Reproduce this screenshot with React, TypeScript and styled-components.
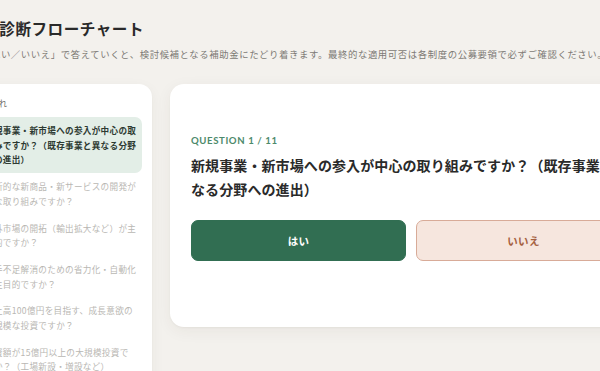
import * as React from "react"
import styled, { createGlobalStyle } from "styled-components"

const GlobalStyle = createGlobalStyle`
  html, body {
    margin: 0;
    padding: 0;
    background: #f3f1ed;
    overflow: hidden;
  }
  body {
    font-family: "Noto Sans CJK JP", "Noto Sans", sans-serif;
    color: #2b2b2b;
  }
`

const questions = [
  "新規事業・新市場への参入が中心の取組みですか？（既存事業と異なる分野への進出）",
  "革新的な新商品・新サービスの開発が主な取り組みですか？",
  "海外市場の開拓（輸出拡大など）が主目的ですか？",
  "人手不足解消のための省力化・自動化が主目的ですか？",
  "売上高100億円を目指す、成長意欲の大規模な投資ですか？",
  "投資額が15億円以上の大規模投資ですか？（工場新設・増設など）",
  "事業場内最低賃金の引上げを計画していますか？",
  "ITツールの導入による業務効率化が目的ですか？",
  "従業員20人以下の小規模事業者ですか？",
  "販路開拓のための広報・展示会出展が中心ですか？",
  "事業承継やM&Aに伴う取り組みですか？",
]

const Styled = {
  Page: styled.div`
    margin-left: -49px;
    padding-top: 17px;
    width: 720px;
  `,
  Title: styled.h1`
    margin: 0;
    font-size: 15.6px;
    line-height: 22px;
    font-weight: 700;
    letter-spacing: 0.5px;
    color: #2a2a2a;
  `,
  Lead: styled.p`
    margin: 8px 0 0;
    font-size: 9.4px;
    line-height: 14px;
    letter-spacing: 0.6px;
    color: #7d7a75;
    white-space: nowrap;
  `,
  Layout: styled.div`
    display: grid;
    grid-template-columns: 201px 482px;
    gap: 18px;
    align-items: start;
    margin-top: 23px;
  `,
  Sidebar: styled.aside`
    background: #ffffff;
    border-radius: 13px;
    padding: 12px 10px 16px 12px;
    box-shadow: 0 1px 2px rgba(60, 50, 30, 0.04), 0 4px 14px rgba(60, 50, 30, 0.05);
  `,
  SideLabel: styled.div`
    font-size: 8.6px;
    line-height: 14px;
    letter-spacing: 0.3px;
    color: #6f6c67;
    margin-bottom: 7px;
  `,
  StepList: styled.ol`
    list-style: none;
    margin: 0;
    padding: 0;
  `,
  Step: styled.li<{ $active?: boolean }>`
    display: flex;
    gap: 3px;
    padding: 6px 5px 6px 6px;
    border-radius: 7px;
    background: ${(p) => (p.$active ? "#e3eee7" : "transparent")};
    color: ${(p) => (p.$active ? "#2d3a32" : "#b9b7b3")};
    font-weight: ${(p) => (p.$active ? 700 : 400)};
    font-size: 8.6px;
    line-height: 14.7px;
    letter-spacing: 0.3px;
  `,
  StepNo: styled.span`
    flex: 0 0 13px;
    font-family: "Liberation Sans", sans-serif;
  `,
  StepText: styled.span`
    flex: 1;
  `,
  Card: styled.section`
    background: #ffffff;
    border-radius: 14px;
    padding: 50px 21px 66px;
    box-shadow: 0 1px 2px rgba(60, 50, 30, 0.04), 0 4px 16px rgba(60, 50, 30, 0.06);
  `,
  Counter: styled.div`
    font-family: "Lato", "Noto Sans", sans-serif;
    font-size: 9.6px;
    line-height: 14px;
    font-weight: 700;
    letter-spacing: 0.6px;
    color: #4d8a6b;
  `,
  Question: styled.h2`
    margin: 6px 0 0;
    font-size: 14px;
    line-height: 23.5px;
    font-weight: 700;
    letter-spacing: 0.1px;
    color: #2a2a2a;
  `,
  Answers: styled.div`
    display: grid;
    grid-template-columns: 1fr 1fr;
    gap: 10px;
    margin-top: 19px;
  `,
  Answer: styled.button<{ $variant: "yes" | "no" }>`
    height: 41px;
    border-radius: 7px;
    font-family: inherit;
    font-size: 10.5px;
    font-weight: 700;
    letter-spacing: 0.3px;
    cursor: pointer;
    border: 1px solid ${(p) => (p.$variant === "yes" ? "#316e52" : "#d8ab98")};
    background: ${(p) => (p.$variant === "yes" ? "#316e52" : "#f6e6de")};
    color: ${(p) => (p.$variant === "yes" ? "#ffffff" : "#a5603f")};
  `,
}

export default function App() {
  const current = 0

  return (
    <>
      <GlobalStyle />
      <Styled.Page>
        <Styled.Title>補助金診断フローチャート</Styled.Title>
        <Styled.Lead>
          質問に「はい／いいえ」で答えていくと、検討候補となる補助金にたどり着きます。最終的な適用可否は各制度の公募要領で必ずご確認ください。
        </Styled.Lead>

        <Styled.Layout>
          <Styled.Sidebar>
            <Styled.SideLabel>質問の流れ</Styled.SideLabel>
            <Styled.StepList>
              {questions.map((q, i) => (
                <Styled.Step key={i} $active={i === current}>
                  <Styled.StepNo>{i + 1}</Styled.StepNo>
                  <Styled.StepText>{q}</Styled.StepText>
                </Styled.Step>
              ))}
            </Styled.StepList>
          </Styled.Sidebar>

          <Styled.Card>
            <Styled.Counter>QUESTION 1 / 11</Styled.Counter>
            <Styled.Question>
              新規事業・新市場への参入が中心の取り組みですか？（既存事業と異なる分野への進出）
            </Styled.Question>
            <Styled.Answers>
              <Styled.Answer $variant="yes">はい</Styled.Answer>
              <Styled.Answer $variant="no">いいえ</Styled.Answer>
            </Styled.Answers>
          </Styled.Card>
        </Styled.Layout>
      </Styled.Page>
    </>
  )
}
